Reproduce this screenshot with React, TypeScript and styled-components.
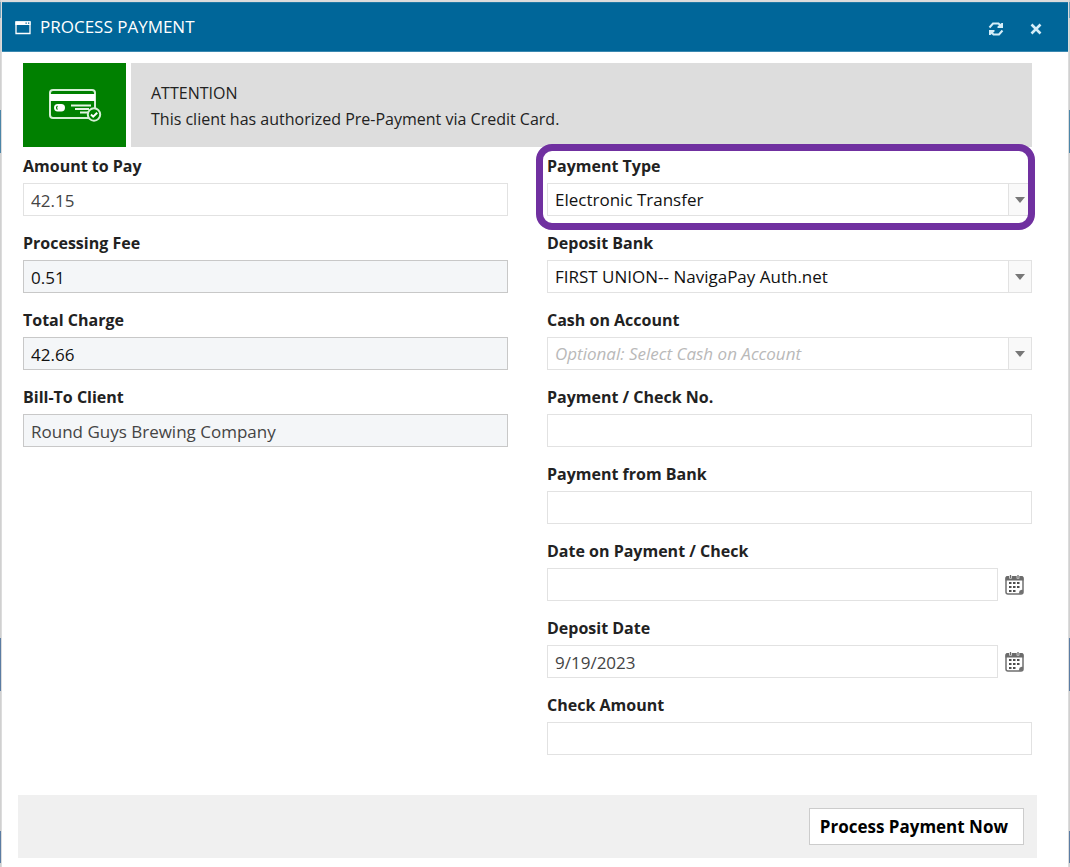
import React, { useState } from "react";
import styled, { createGlobalStyle, css } from "styled-components";

const GlobalStyle = createGlobalStyle`
  *, *::before, *::after { box-sizing: border-box; }
  body {
    margin: 0;
    font-family: "Open Sans", "Noto Sans", sans-serif;
    font-size: 16px;
    color: #222;
    background: linear-gradient(
      #cfcfcf 0 2px, #6fa3bd 2px 18px, #d0d0d0 18px 110px, #4c85a8 110px 153px,
      #d0d0d0 153px 638px, #5b7ca3 638px 691px, #d0d0d0 691px 831px,
      #5b7ca3 831px 863px, #d0d0d0 863px
    );
  }
`;

const Dialog = styled.main`
  display: flex;
  flex-direction: column;
  min-height: 100vh;
  margin: 0 1px;
  border: solid #dcdcdc;
  border-width: 2px 1px 0;
  background: #fff;
`;

const TitleBar = styled.header`
  display: flex;
  align-items: center;
  gap: 8px;
  height: 50px;
  padding: 0 26px 0 13px;
  background: #006699;
  border-top: 1px solid #1f78a5;
  border-bottom: 1px solid #3a88b0;
  color: #fff;
`;

const Title = styled.h1`
  flex: 1;
  margin: 0;
  font-size: 17px;
  font-weight: 400;
  line-height: 24px;
`;

const IconButton = styled.button`
  display: flex;
  padding: 0;
  border: 0;
  background: none;
  color: #d5edf8;
  cursor: pointer;
`;

const TitleActions = styled.div`
  display: flex;
  align-items: center;
  gap: 26px;
  padding-top: 3px;
`;

const Content = styled.div`
  padding: 11px 36px 0 21px;
`;

const Banner = styled.section`
  display: flex;
  gap: 5px;
  height: 84px;
`;

const BannerIcon = styled.div`
  display: flex;
  align-items: center;
  justify-content: center;
  width: 103px;
  background: #008000;
`;

const BannerText = styled.div`
  flex: 1;
  padding: 17px 20px;
  background: #dddddd;
  line-height: 26px;

  p { margin: 0; }
`;

const Form = styled.form`
  display: flex;
  flex: 1;
  flex-direction: column;
`;

const Columns = styled.div`
  display: grid;
  grid-template-columns: 1fr 1fr;
  column-gap: 39px;
  padding: 8px 36px 0 21px;
`;

const Column = styled.div`
  display: flex;
  flex-direction: column;
  gap: 16px;
`;

const FieldBox = styled.div<{ $highlight?: boolean }>`
  position: relative;

  ${({ $highlight }) =>
    $highlight &&
    css`
      &::after {
        content: "";
        position: absolute;
        inset: -11px -3px -14px -11px;
        border: 7px solid #7030a0;
        border-radius: 16px;
        pointer-events: none;
      }
    `}
`;

const Label = styled.label`
  display: block;
  margin-bottom: 6px;
  font-weight: 700;
  line-height: 22px;
`;

const control = css`
  display: block;
  width: 100%;
  height: 33px;
  padding: 2px 7px 0;
  border: 1px solid #e2e2e2;
  border-radius: 0;
  background: #fff;
  font: inherit;
  font-size: 17px;
  color: #444;
`;

const TextInput = styled.input<{ $dark?: boolean }>`
  ${control}

  &:read-only {
    background: #f4f6f8;
    border-color: #c8c8c8;
  }

  ${({ $dark }) => $dark && "color: #111;"}
`;

const SelectBox = styled.div`
  position: relative;
`;

const Select = styled.select<{ $empty?: boolean }>`
  ${control}
  appearance: none;
  padding: 0 30px 0 7px;
  color: #111;
  opacity: 1;
  ${({ $empty }) => $empty && "color: #b9b9b9; font-style: italic;"}
`;

const SelectArrow = styled.span`
  position: absolute;
  top: 1px;
  right: 1px;
  bottom: 1px;
  display: flex;
  align-items: center;
  justify-content: center;
  width: 23px;
  border-left: 1px solid #e2e2e2;
  background: #f9f9f9;
  pointer-events: none;
`;

const DateRow = styled.div`
  display: flex;
  align-items: center;
  gap: 7px;
  padding-right: 8px;
`;

const Footer = styled.footer`
  display: flex;
  align-items: center;
  justify-content: flex-end;
  height: 63px;
  margin: 40px 31px 0 16px;
  padding: 0 13px;
  background: #f0f0f0;
`;

const SubmitButton = styled.button`
  height: 37px;
  padding: 0 15px 0 10px;
  border: 1px solid #ccc;
  background: #fff;
  font: inherit;
  font-size: 17px;
  font-weight: 700;
  color: #000;
  cursor: pointer;
`;

const WindowIcon = () => (
  <svg width="17" height="16" viewBox="0 0 17 16" aria-hidden="true">
    <path d="M1 3h14v11.500H1z" fill="none" stroke="#fff" strokeWidth="1.300" />
    <path d="M.4 2.400h15.200V6H.4z" fill="#fff" />
    <path d="M10.500 3.500h1.300v1.300h-1.300zM13 3.500h1.300v1.300H13z" fill="#006699" />
  </svg>
);

const RefreshIcon = () => (
  <svg width="16" height="16" viewBox="0 0 16 16" aria-hidden="true">
    <path
      d="M1.500 6.500L5 2.500H10.500L12.500 4.500M14.500 9.500L11 13.500H5.500L3.500 11.500"
      fill="none"
      stroke="currentColor"
      strokeWidth="2"
    />
    <path d="M15 2v5H9.500V5.500L13.500 2zM1 14V9h5.500v1.500L2.500 14z" fill="currentColor" />
  </svg>
);

const CloseIcon = () => (
  <svg width="12" height="12" viewBox="0 0 12 12" aria-hidden="true">
    <path d="M1.500 1.500l9 9M10.500 1.500l-9 9" stroke="currentColor" strokeWidth="2.600" />
  </svg>
);

const CardIcon = () => (
  <svg width="54" height="34" viewBox="0 0 54 34" aria-hidden="true">
    <rect x="2" y="2" width="45" height="28" rx="3" fill="none" stroke="#d5efd5" strokeWidth="2" />
    <path d="M2 6h45v7H2z" fill="#fff" />
    <rect x="6" y="16" width="11" height="7.500" rx="3.700" fill="#fff" />
    <path d="M9.500 18a2.200 2.200 0 0 0 0 3.600" fill="none" stroke="#008000" strokeWidth="1.200" />
    <path d="M23 17.500h20M27 21h14M32 24.500h8" stroke="#e4f4e4" strokeWidth="1.800" />
    <circle cx="46" cy="26.500" r="6.200" fill="#008000" stroke="#d5efd5" strokeWidth="2" />
    <path d="M43 26.500l2.200 2.200 4-4" fill="none" stroke="#fff" strokeWidth="2" />
  </svg>
);

const CalendarIcon = () => (
  <svg width="19" height="23" viewBox="0 0 19 23" aria-hidden="true">
    <rect x="1" y="4" width="17" height="17" rx="2" fill="#fff" stroke="#707070" strokeWidth="1.500" />
    <path d="M.5 4.500a1.500 1.500 0 0 1 1.500-1.500h15a1.500 1.500 0 0 1 1.500 1.500V7.500H.5z" fill="#6b6b6b" />
    <path d="M18 16.500c-1 .8-2.500.5-3.200 1s-.3 2.300-1.300 3.300h3a1.500 1.500 0 0 0 1.500-1.500z" fill="#707070" />
    <path d="M5.500 2v3.500M13 2v3.500" stroke="#fff" strokeWidth="2.600" />
    <path d="M5.500 2v3M13 2v3" stroke="#6b6b6b" strokeWidth="1.300" />
    <path d="M4 9h2.500v2H4zM8 9h2.500v2H8zM12 9h2.500v2H12zM4 13h2.500v2H4zM8 13h2.500v2H8zM12 13h2.500v2H12zM4 17h2.500v2H4zM8 17h2.500v2H8z" fill="#4d4d4d" />
  </svg>
);

interface FieldProps {
  id: string;
  label: string;
  highlight?: boolean;
  children: React.ReactNode;
}

const Field = ({ id, label, highlight, children }: FieldProps) => (
  <FieldBox $highlight={highlight}>
    <Label htmlFor={id}>{label}</Label>
    {children}
  </FieldBox>
);

const Dropdown = ({ id, option, empty }: { id: string; option: string; empty?: boolean }) => (
  <SelectBox>
    <Select id={id} $empty={empty}>
      <option>{option}</option>
    </Select>
    <SelectArrow>
      <svg width="10" height="6" viewBox="0 0 10 6" aria-hidden="true">
        <path d="M0 0h10L5 6z" fill="#777" />
      </svg>
    </SelectArrow>
  </SelectBox>
);

const DateInput = ({ id, value = "" }: { id: string; value?: string }) => (
  <DateRow>
    <TextInput id={id} defaultValue={value} />
    <IconButton type="button" aria-label="Open calendar">
      <CalendarIcon />
    </IconButton>
  </DateRow>
);

export default function App() {
  const [amount, setAmount] = useState("42.15");

  return (
    <>
      <GlobalStyle />
      <Dialog>
        <TitleBar>
          <WindowIcon />
          <Title>PROCESS PAYMENT</Title>
          <TitleActions>
            <IconButton type="button" aria-label="Refresh"><RefreshIcon /></IconButton>
            <IconButton type="button" aria-label="Close"><CloseIcon /></IconButton>
          </TitleActions>
        </TitleBar>
        <Content>
          <Banner>
            <BannerIcon><CardIcon /></BannerIcon>
            <BannerText>
              <p>ATTENTION</p>
              <p>This client has authorized Pre-Payment via Credit Card.</p>
            </BannerText>
          </Banner>
        </Content>
        <Form onSubmit={(e) => e.preventDefault()}>
          <Columns>
            <Column>
              <Field id="amount" label="Amount to Pay">
                <TextInput id="amount" value={amount} onChange={(e) => setAmount(e.target.value)} />
              </Field>
              <Field id="fee" label="Processing Fee">
                <TextInput id="fee" value="0.51" readOnly $dark />
              </Field>
              <Field id="total" label="Total Charge">
                <TextInput id="total" value="42.66" readOnly $dark />
              </Field>
              <Field id="client" label="Bill-To Client">
                <TextInput id="client" value="Round Guys Brewing Company" readOnly />
              </Field>
            </Column>
            <Column>
              <Field id="type" label="Payment Type" highlight>
                <Dropdown id="type" option="Electronic Transfer" />
              </Field>
              <Field id="bank" label="Deposit Bank">
                <Dropdown id="bank" option="FIRST UNION-- NavigaPay Auth.net" />
              </Field>
              <Field id="cash" label="Cash on Account">
                <Dropdown id="cash" option="Optional: Select Cash on Account" empty />
              </Field>
              <Field id="check-no" label="Payment / Check No.">
                <TextInput id="check-no" />
              </Field>
              <Field id="from-bank" label="Payment from Bank">
                <TextInput id="from-bank" />
              </Field>
              <Field id="check-date" label="Date on Payment / Check">
                <DateInput id="check-date" />
              </Field>
              <Field id="deposit-date" label="Deposit Date">
                <DateInput id="deposit-date" value="9/19/2023" />
              </Field>
              <Field id="check-amount" label="Check Amount">
                <TextInput id="check-amount" />
              </Field>
            </Column>
          </Columns>
          <Footer>
            <SubmitButton type="submit">Process Payment Now</SubmitButton>
          </Footer>
        </Form>
      </Dialog>
    </>
  );
}
